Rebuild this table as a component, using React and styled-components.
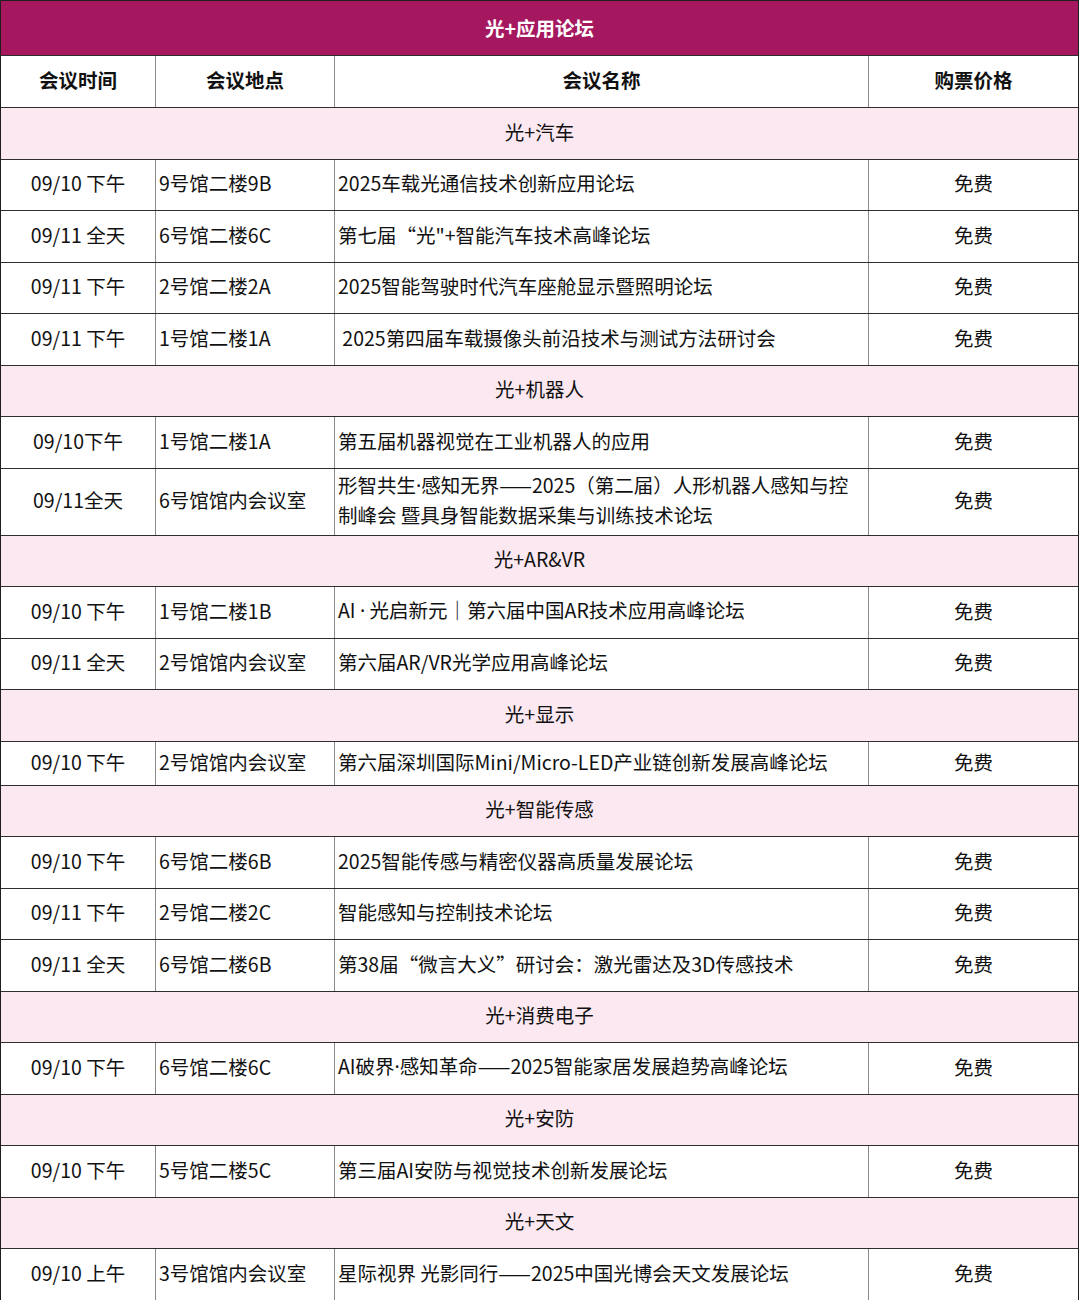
import React from 'react';
import styled, { createGlobalStyle } from 'styled-components';

const GlobalStyle = createGlobalStyle`
  html, body {
    margin: 0;
    padding: 0;
    background: #ffffff;
  }
  body {
    font-family: "Noto Sans CJK SC", "Noto Sans", sans-serif;
    color: #111;
  }
`;

const Table = styled.div`
  width: 1079px;
  box-sizing: border-box;
  border: 1px solid #1e1e1e;
  font-size: 19.5px;
`;

const TitleRow = styled.div`
  height: 54px;
  box-sizing: border-box;
  padding-bottom: 2px;
  background: #a5175e;
  color: #ffffff;
  font-weight: 700;
  display: flex;
  align-items: center;
  justify-content: center;
`;

const Row = styled.div`
  display: grid;
  grid-template-columns: 155px 179px 534px 209px;
  box-sizing: border-box;
  height: ${(p) => p.$h}px;
  border-top: 1px solid #2e2e2e;
  font-weight: ${(p) => (p.$bold ? 700 : 400)};
`;

const Cell = styled.div`
  display: flex;
  align-items: center;
  justify-content: ${(p) => (p.$center ? 'center' : 'flex-start')};
  text-align: ${(p) => (p.$center ? 'center' : 'left')};
  box-sizing: border-box;
  padding: 0 3px 4px;
  line-height: 29px;
  border-right: ${(p) => (p.$last ? 'none' : '1px solid #8a8a8a')};
  overflow: hidden;
`;

const CategoryRow = styled.div`
  box-sizing: border-box;
  height: ${(p) => p.$h}px;
  padding-bottom: 4px;
  border-top: 1px solid #2e2e2e;
  background: #fbe8f0;
  display: flex;
  align-items: center;
  justify-content: center;
`;

// narrow latin middle dot, as in the source text
const Dot = styled.span`
  font-family: "Noto Sans", sans-serif;
`;

const sections = [
  {
    title: '光+汽车',
    rows: [
      ['09/10 下午', '9号馆二楼9B', '2025车载光通信技术创新应用论坛'],
      ['09/11 全天', '6号馆二楼6C', '第七届“光"+智能汽车技术高峰论坛'],
      ['09/11 下午', '2号馆二楼2A', '2025智能驾驶时代汽车座舱显示暨照明论坛'],
      ['09/11 下午', '1号馆二楼1A', '\u00a02025第四届车载摄像头前沿技术与测试方法研讨会'],
    ],
  },
  {
    title: '光+机器人',
    rows: [
      ['09/10下午', '1号馆二楼1A', '第五届机器视觉在工业机器人的应用'],
      ['09/11全天', '6号馆馆内会议室', '形智共生·感知无界——2025（第二届）人形机器人感知与控制峰会 暨具身智能数据采集与训练技术论坛', 67],
    ],
  },
  {
    title: '光+AR&VR',
    rows: [
      ['09/10 下午', '1号馆二楼1B', 'AI · 光启新元｜第六届中国AR技术应用高峰论坛'],
      ['09/11 全天', '2号馆馆内会议室', '第六届AR/VR光学应用高峰论坛'],
    ],
  },
  {
    title: '光+显示',
    rows: [['09/10 下午', '2号馆馆内会议室', '第六届深圳国际Mini/Micro-LED产业链创新发展高峰论坛', 44]],
  },
  {
    title: '光+智能传感',
    rows: [
      ['09/10 下午', '6号馆二楼6B', '2025智能传感与精密仪器高质量发展论坛'],
      ['09/11 下午', '2号馆二楼2C', '智能感知与控制技术论坛'],
      ['09/11 全天', '6号馆二楼6B', '第38届“微言大义”研讨会：激光雷达及3D传感技术'],
    ],
  },
  {
    title: '光+消费电子',
    rows: [['09/10 下午', '6号馆二楼6C', 'AI破界·感知革命——2025智能家居发展趋势高峰论坛']],
  },
  {
    title: '光+安防',
    rows: [['09/10 下午', '5号馆二楼5C', '第三届AI安防与视觉技术创新发展论坛']],
  },
  {
    title: '光+天文',
    rows: [['09/10 上午', '3号馆馆内会议室', '星际视界 光影同行——2025中国光博会天文发展论坛']],
  },
];

const ROW_H = 51.5;

function withDots(text) {
  const parts = text.split('·');
  return parts.map((part, i) => (
    <React.Fragment key={i}>
      {i > 0 && <Dot>·</Dot>}
      {part}
    </React.Fragment>
  ));
}

export default function App() {
  return (
    <>
      <GlobalStyle />
      <Table>
        <TitleRow>光+应用论坛</TitleRow>
        <Row $h={52} $bold>
          <Cell $center>会议时间</Cell>
          <Cell $center>会议地点</Cell>
          <Cell $center>会议名称</Cell>
          <Cell $center $last>购票价格</Cell>
        </Row>
        {sections.map((s) => (
          <React.Fragment key={s.title}>
            <CategoryRow $h={ROW_H}>{s.title}</CategoryRow>
            {s.rows.map(([time, place, name, h]) => (
              <Row key={name} $h={h || ROW_H}>
                <Cell $center>{time}</Cell>
                <Cell>{place}</Cell>
                <Cell>
                  <span>{withDots(name)}</span>
                </Cell>
                <Cell $center $last>免费</Cell>
              </Row>
            ))}
          </React.Fragment>
        ))}
      </Table>
    </>
  );
}
